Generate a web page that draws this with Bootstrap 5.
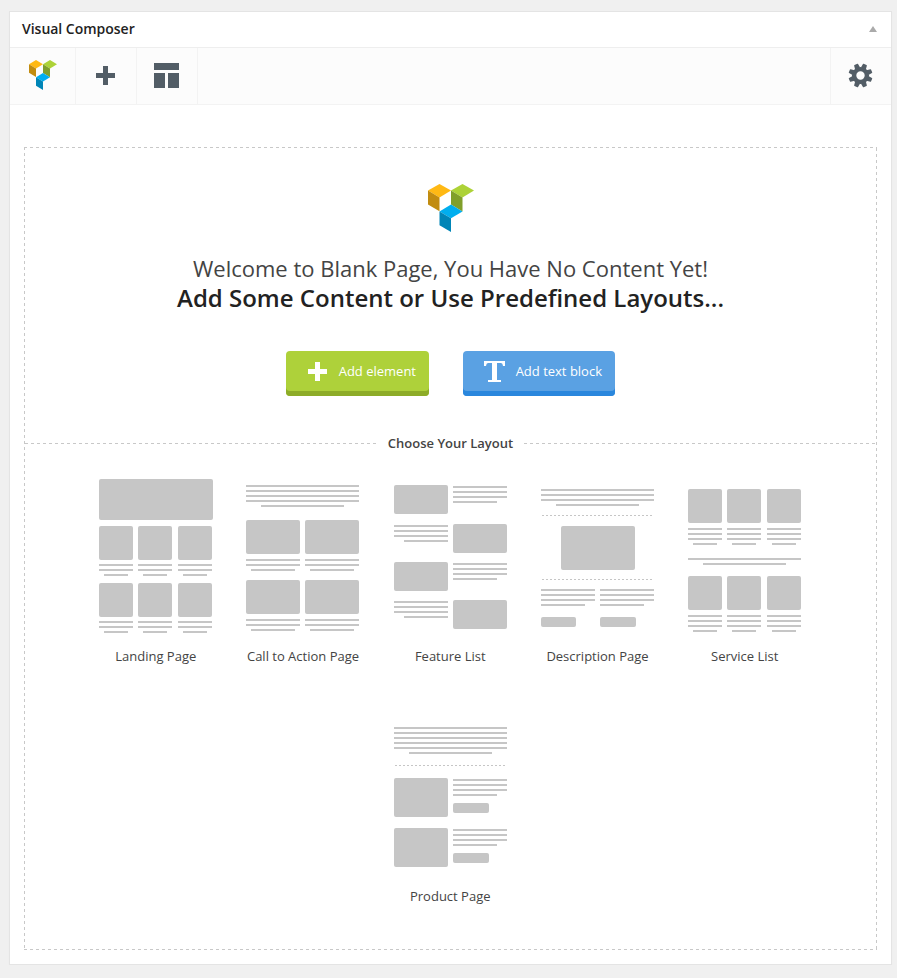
<!DOCTYPE html>
<html lang="en">
<head>
<meta charset="utf-8">
<meta name="viewport" content="width=device-width, initial-scale=1">
<title>Visual Composer</title>
<link href="https://cdn.jsdelivr.net/npm/bootstrap@5.3.0/dist/css/bootstrap.min.css" rel="stylesheet">
<style>
:root{--dash-x:repeating-linear-gradient(90deg,#c8c8c8 0 3px,transparent 3px 6px);--dash-y:repeating-linear-gradient(180deg,#c8c8c8 0 3px,transparent 3px 6px)}
body{background:#f0f0f0;font-family:"Open Sans",sans-serif;color:#444;font-size:13px}
svg{display:block;flex:none}
.composer{margin:11px 5px 0 9px;height:954px;border:1px solid #e4e4e4;border-radius:0;box-shadow:0 1px 1px rgba(0,0,0,.04)}
.composer-head{height:36px;background:#fff;border-bottom:1px solid #eee;padding:0 14px 2px 12px}
.composer-head h1{font-size:14px;font-weight:600;color:#222;line-height:20px;letter-spacing:-.02px}
.tools{height:57px;background:#fcfcfc;border-bottom:1px solid #f3f3f3;color:#525d66}
.tool{height:56px;width:61px;padding:0 2px 1px 0;border:0;border-right:1px solid #f3f3f3;background:none;color:inherit}
.tool-brand{width:66px;padding:0 0 2px}
.tool-gear{border-right:0;border-left:1px solid #f3f3f3;padding:0 1px 1px 0}
.blank-page{margin:42px 14px 14px;padding:1px;height:803px;background:var(--dash-x) 0 0/100% 1px no-repeat,var(--dash-x) 0 100%/100% 1px no-repeat,var(--dash-y) 0 0/1px 100% no-repeat,var(--dash-y) 100% 1px/1px 100% no-repeat}
.hero-logo{margin-top:36px}
.welcome{font-size:22px;line-height:30px;margin-top:21px;color:#444}
.welcome strong{font-size:24px;font-weight:600;color:#222}
.welcome span,.welcome strong{display:block;height:30px}
.actions{gap:34px;margin-top:38px}
.action{height:45px;border:0;border-radius:4px;color:#fff;font-size:13px;padding:0 13px 4px 22px}
.action:hover{color:#fff}
.action-add{width:143px;background:#aed13a;box-shadow:inset 0 -5px #8dac28}
.action-text{width:152px;padding-left:21px;background:#5aa1e3;box-shadow:inset 0 -5px #2a87dd}
.divider{margin-top:37px;height:20px;font-weight:600;line-height:20px}
.divider-name{padding:0 11px}
.rule{height:1px;background:var(--dash-x)}
.layouts{margin-top:17px}
.layout-item{width:147.25px;height:240px}
.layout-item svg{margin-left:16.7px;fill:#c6c6c6;stroke:none}
.layout-item .ln{stroke:#c6c6c6;stroke-width:2;fill:none}
.layout-item .dots{stroke:#c6c6c6;stroke-width:1;stroke-dasharray:2 2;fill:none}
.layout-name{margin-top:6px;padding-right:.5px;line-height:20px}
</style>
<script src="https://cdn.jsdelivr.net/npm/bootstrap@5.3.0/dist/js/bootstrap.bundle.min.js"></script>
</head>
<body>
<svg width="0" height="0" class="d-none">
  <symbol id="logo" viewBox="0 0 46 48" preserveAspectRatio="none">
    <path fill="#ffb914" d="M0 6.6 11.5 0 23 6.6 11.5 13.4z"/><path fill="#c18c10" d="M0 6.6l11.5 6.8V27.2L0 20.4z"/>
    <path fill="#add237" d="M23 6.6 34.5 0 46 6.6 34.5 13.4z"/><path fill="#809f2a" d="M23 6.6l11.5 6.8V27.4L23 20.6z"/>
    <path fill="#00aeef" d="M11.5 27.4 23 20.6l11.5 6.8L23 34.2z"/><path fill="#0085b7" d="M11.5 27.4 23 34.2V48l-11.5-6.8z"/>
  </symbol>
</svg>
<main class="composer card">
  <header class="composer-head d-flex align-items-center justify-content-between">
    <h1 class="m-0">Visual Composer</h1>
    <svg width="8" height="6" fill="#aaa"><path d="M4 0 8 6H0z"/></svg>
  </header>
  <nav class="tools d-flex">
    <button class="tool tool-brand d-flex align-items-center justify-content-center" aria-label="Visual Composer"><svg width="28" height="30"><use href="#logo"/></svg></button>
    <button class="tool d-flex align-items-center justify-content-center" aria-label="Add element"><svg width="19" height="19" fill="currentColor"><path d="M7 0h5v7h7v5h-7v7H7v-7H0V7h7z"/></svg></button>
    <button class="tool d-flex align-items-center justify-content-center" aria-label="Templates"><svg width="25" height="25" fill="currentColor"><path d="M0 0h25v7H0zM0 10h11v15H0zM14 10h11v15H14z"/></svg></button>
    <button class="tool tool-gear ms-auto d-flex align-items-center justify-content-center" aria-label="Settings">
      <svg width="25" height="25" viewBox="-12.500 -12.500 25 25" fill="currentColor">
        <circle r="6.4" fill="none" stroke="currentColor" stroke-width="4.400"/>
        <g id="teeth"><path id="tooth" transform="rotate(22.5)" d="M-2.700-7.500-2.100-11.500Q-2-12-1.500-12H1.500Q2-12 2.100-11.500L2.700-7.500z"/><use href="#tooth" transform="rotate(45)"/><use href="#tooth" transform="rotate(90)"/><use href="#tooth" transform="rotate(135)"/></g>
        <use href="#teeth" transform="rotate(180)"/>
      </svg>
    </button>
  </nav>
  <section class="blank-page d-flex flex-column">
    <svg class="hero-logo mx-auto" width="46" height="48"><use href="#logo"/></svg>
    <h2 class="welcome text-center mb-0 fw-normal"><span>Welcome to Blank Page, You Have No Content Yet!</span><strong>Add Some Content or Use Predefined Layouts...</strong></h2>
    <div class="d-flex justify-content-center actions">
      <button class="action action-add btn d-flex align-items-center justify-content-between"><svg width="19" height="19" fill="#fff"><path d="M7 0h5v7h7v5h-7v7H7v-7H0V7h7z"/></svg>Add element</button>
      <button class="action action-text btn d-flex align-items-center justify-content-between"><svg width="21" height="21" fill="#fff"><path d="M0 0h21v5h-2q-.3-3-2-3h-4v17h4v2H4v-2h4V2H4Q2.300 2 2 5H0z"/></svg>Add text block</button>
    </div>
    <div class="divider d-flex align-items-center"><span class="rule flex-fill"></span><span class="divider-name">Choose Your Layout</span><span class="rule flex-fill"></span></div>
    <div class="layouts d-flex flex-wrap justify-content-center">
      <div class="layout-item"><svg width="114" height="170">
        <rect y="9" width="114" height="41" rx="2"/>
        <rect y="56" width="34" height="34" rx="2"/><rect x="39" y="56" width="34" height="34" rx="2"/><rect x="79" y="56" width="34" height="34" rx="2"/>
        <path class="ln" d="M0 95h34m5 0h34m6 0h34M0 100h34m5 0h34m6 0h34M5 105h24m15 0h24m16 0h24"/>
        <rect y="113" width="34" height="34" rx="2"/><rect x="39" y="113" width="34" height="34" rx="2"/><rect x="79" y="113" width="34" height="34" rx="2"/>
        <path class="ln" d="M0 152h34m5 0h34m6 0h34M0 157h34m5 0h34m6 0h34M5 162h24m15 0h24m16 0h24"/>
      </svg><div class="layout-name text-center">Landing Page</div></div>
      <div class="layout-item"><svg width="114" height="170">
        <path class="ln" d="M0 16h113M0 21h113M0 26h113M0 31h113M15 36h83"/>
        <rect y="50" width="54" height="34" rx="2"/><rect x="59" y="50" width="54" height="34" rx="2"/>
        <path class="ln" d="M0 90h54m5 0h54M0 95h54m5 0h54M5 100h44m15 0h44"/>
        <rect y="110" width="54" height="34" rx="2"/><rect x="59" y="110" width="54" height="34" rx="2"/>
        <path class="ln" d="M0 150h54m5 0h54M0 155h54m5 0h54M5 160h44m15 0h44"/>
      </svg><div class="layout-name text-center">Call to Action Page</div></div>
      <div class="layout-item"><svg width="114" height="170">
        <rect y="15" width="54" height="29" rx="2"/><path class="ln" d="M59 17h54M59 22h54M59 27h54M59 32h44"/>
        <path class="ln" d="M0 56h54M0 61h54M0 66h54M10 71h44"/><rect x="59" y="54" width="54" height="29" rx="2"/>
        <rect y="92" width="54" height="29" rx="2"/><path class="ln" d="M59 94h54M59 99h54M59 104h54M59 109h44"/>
        <path class="ln" d="M0 132h54M0 137h54M0 142h54M10 147h44"/><rect x="59" y="130" width="54" height="29" rx="2"/>
      </svg><div class="layout-name text-center">Feature List</div></div>
      <div class="layout-item"><svg width="114" height="170">
        <path class="ln" d="M0 20h113M0 25h113M0 30h113M15 35h83"/><path class="dots" d="M1 45.500h110"/>
        <rect x="20" y="56" width="74" height="44" rx="2"/><path class="dots" d="M1 109.500h110"/>
        <path class="ln" d="M0 120h54m5 0h54M0 125h54m5 0h54M0 130h54m5 0h54M0 135h44m15 0h44"/>
        <rect y="147" width="35" height="10" rx="2"/><rect x="59" y="147" width="36" height="10" rx="2"/>
      </svg><div class="layout-name text-center">Description Page</div></div>
      <div class="layout-item"><svg width="114" height="170">
        <rect y="19" width="34" height="34" rx="2"/><rect x="39" y="19" width="34" height="34" rx="2"/><rect x="79" y="19" width="34" height="34" rx="2"/>
        <path class="ln" d="M0 59h34m5 0h34m6 0h34M0 64h34m5 0h34m6 0h34M0 69h34m5 0h34m6 0h34M5 74h24m15 0h24m16 0h24"/>
        <path class="ln" d="M0 89h113M15 94h83"/>
        <rect y="106" width="34" height="34" rx="2"/><rect x="39" y="106" width="34" height="34" rx="2"/><rect x="79" y="106" width="34" height="34" rx="2"/>
        <path class="ln" d="M0 146h34m5 0h34m6 0h34M0 151h34m5 0h34m6 0h34M0 156h34m5 0h34m6 0h34M5 161h24m15 0h24m16 0h24"/>
      </svg><div class="layout-name text-center">Service List</div></div>
      <div class="layout-item"><svg width="114" height="170">
        <path class="ln" d="M0 18h113M0 23h113M0 28h113M0 33h113M0 38h113M15 43h83"/><path class="dots" d="M1 55.500h110"/>
        <rect y="68" width="54" height="39" rx="2"/><path class="ln" d="M59 70h54M59 75h54M59 80h54M59 85h44"/><rect x="59" y="93" width="36" height="10" rx="2"/>
        <rect y="118" width="54" height="39" rx="2"/><path class="ln" d="M59 120h54M59 125h54M59 130h54M59 135h44"/><rect x="59" y="143" width="36" height="10" rx="2"/>
      </svg><div class="layout-name text-center">Product Page</div></div>
    </div>
  </section>
</main>
</body>
</html>
